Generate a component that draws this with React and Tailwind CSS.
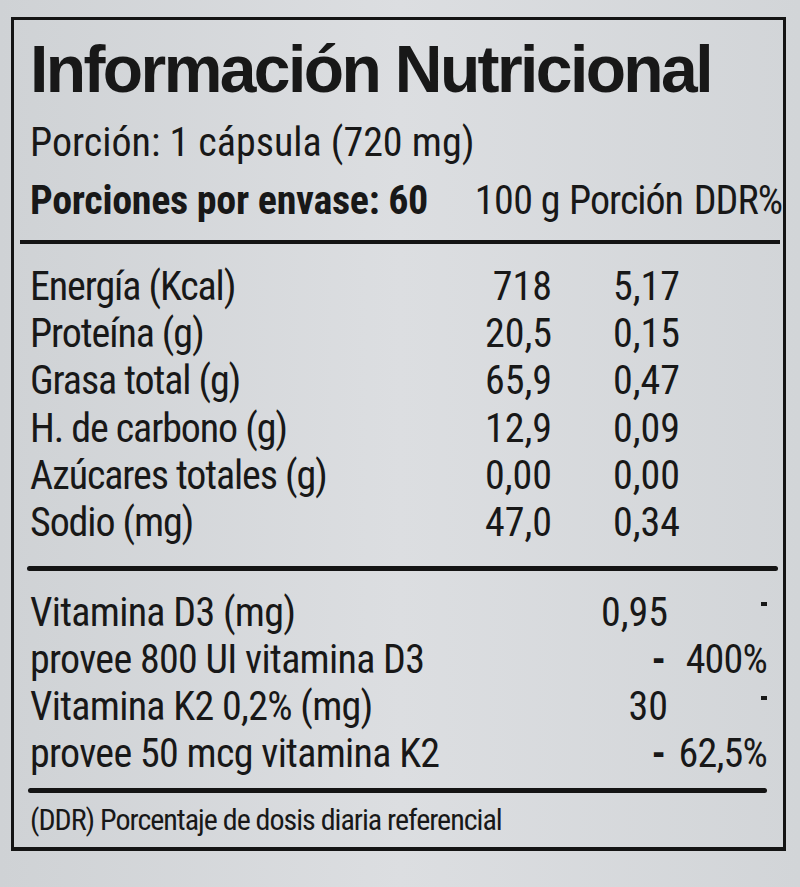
import React from 'react'

const nutrients = [
  { label: "Energía (Kcal)", a: "718", b: "5,17" },
  { label: "Proteína (g)", a: "20,5", b: "0,15" },
  { label: "Grasa total (g)", a: "65,9", b: "0,47" },
  { label: "H. de carbono (g)", a: "12,9", b: "0,09" },
  { label: "Azúcares totales (g)", a: "0,00", b: "0,00" },
  { label: "Sodio (mg)", a: "47,0", b: "0,34" },
];

// dot = the small raised mark in the DDR column
const vitamins = [
  { label: "Vitamina D3 (mg)", b: "0,95", dot: true },
  { label: "provee 800 UI vitamina D3", b: "-", c: "400%" },
  { label: "Vitamina K2 0,2% (mg)", b: "30", dot: true },
  { label: "provee 50 mcg vitamina K2", b: "-", c: "62,5%" },
];

const narrow = "font-['Roboto',sans-serif] font-stretch-[75%]";

export default function App() {
  return (
    <div className="w-[800px] h-[887px] overflow-hidden bg-linear-to-r from-[#cfd2d5] via-[#dcdee1] to-[#d2d5d8] pt-[17px] pl-[11px] text-[#181818]">
      <div className="w-[775px] h-[834px] border-[3px] border-b-4 border-[#141414]">
        <h1 className="pl-[16px] pt-[9px] font-['Liberation_Sans',sans-serif] font-bold text-[66px] leading-[80px] tracking-[-2.6px] whitespace-nowrap">
          Información Nutricional
        </h1>

        <p className={`pl-[16px] mt-[8px] ${narrow} text-[40px] leading-[52px] whitespace-nowrap`}>
          Porción: 1 cápsula (720 mg)
        </p>

        <div className={`pl-[16px] mt-[6px] flex items-baseline whitespace-nowrap ${narrow} text-[40px] leading-[52px]`}>
          <span className="w-[400px] font-bold tracking-[-0.3px]">Porciones por envase: 60</span>
          <span className="w-[130px] text-right tracking-[-0.6px]">100 g</span>
          <span className="w-[123px] text-right tracking-[-1px]">Porción</span>
          <span className="w-[99px] text-right tracking-[-1px]">DDR%</span>
        </div>

        <div className="ml-[6px] mt-[13px] w-[760px] h-[4px] bg-[#141414]" />

        <div className={`pl-[16px] pt-[19px] ${narrow} text-[40px] leading-[47.2px]`}>
          {nutrients.map(n => (
            <div key={n.label} className="flex whitespace-nowrap">
              <span className="w-[440px] tracking-[-1.1px]">{n.label}</span>
              <span className="w-[82px] text-right">{n.a}</span>
              <span className="w-[128px] text-right">{n.b}</span>
            </div>
          ))}
        </div>

        <div className="ml-[13px] mt-[20px] w-[751px] h-[5px] bg-[#141414] rounded-full" />

        <div className={`pl-[16px] pt-[18px] ${narrow} text-[40px] leading-[47px]`}>
          {vitamins.map(v => (
            <div key={v.label} className="flex whitespace-nowrap">
              <span className="w-[538px] tracking-[-0.7px]">{v.label}</span>
              <span className={`w-[100px] text-right ${v.b === "-" ? "font-bold pr-[2px]" : ""}`}>{v.b}</span>
              {v.dot ? (
                <span className="w-[99px] flex justify-end items-start pt-[13px]">
                  <span className="w-[6px] h-[4px] bg-[#181818]" />
                </span>
              ) : (
                <span className="w-[99px] text-right tracking-[-0.8px]">{v.c}</span>
              )}
            </div>
          ))}
        </div>

        <div className="ml-[14px] mt-[11px] w-[739px] h-[5px] bg-[#141414] rounded-full" />

        <p className={`pl-[16px] pt-[9px] ${narrow} text-[30px] leading-[36px] tracking-[-1px] whitespace-nowrap`}>
          (DDR) Porcentaje de dosis diaria referencial
        </p>
      </div>
    </div>
  )
}
